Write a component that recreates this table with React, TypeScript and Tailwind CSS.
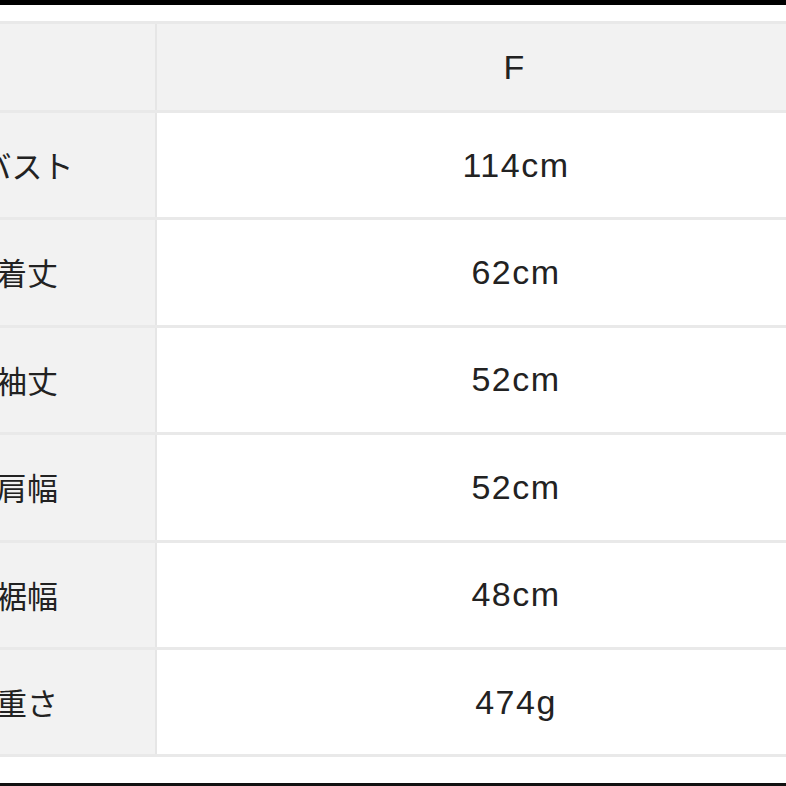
const rows = [
  { label: "バスト", value: "114cm" },
  { label: "着丈", value: "62cm" },
  { label: "袖丈", value: "52cm" },
  { label: "肩幅", value: "52cm" },
  { label: "裾幅", value: "48cm" },
  { label: "重さ", value: "474g" },
]

export default function App() {
  return (
    <div
      className="w-[786px] h-[786px] overflow-hidden bg-white flex flex-col text-[#222222]"
      style={{ fontFamily: '"Liberation Sans", "Noto Sans CJK JP", sans-serif' }}
    >
      <div className="h-[5px] bg-black shrink-0" />
      <div className="h-[16px] shrink-0" />

      {/* size table, cropped on both sides like the photo */}
      <div className="ml-[-101px] w-[972px] border-t-[3px] border-[#e9e9e9] shrink-0">
        <div className="flex h-[89px] border-b-[3px] border-[#e9e9e9] bg-[#f2f2f2]">
          <div className="w-[258px] border-r-2 border-[#e6e6e6]" />
          <div className="flex-1 flex items-center justify-center text-[34px]">F</div>
        </div>
        {rows.map((row) => (
          <div key={row.label} className="flex h-[107.4px] border-b-[3px] border-[#e9e9e9]">
            <div className="w-[258px] bg-[#f2f2f2] border-r-2 border-[#e6e6e6] flex items-center justify-center text-[31px] font-['Noto_Sans_CJK_JP']">
              {row.label}
            </div>
            <div className="flex-1 bg-white flex items-center justify-center pl-[4px] text-[34px] tracking-[1.5px]">
              {row.value}
            </div>
          </div>
        ))}
      </div>

      <div className="flex-1" />
      <div className="h-[3px] bg-[#111111] shrink-0" />
    </div>
  )
}
